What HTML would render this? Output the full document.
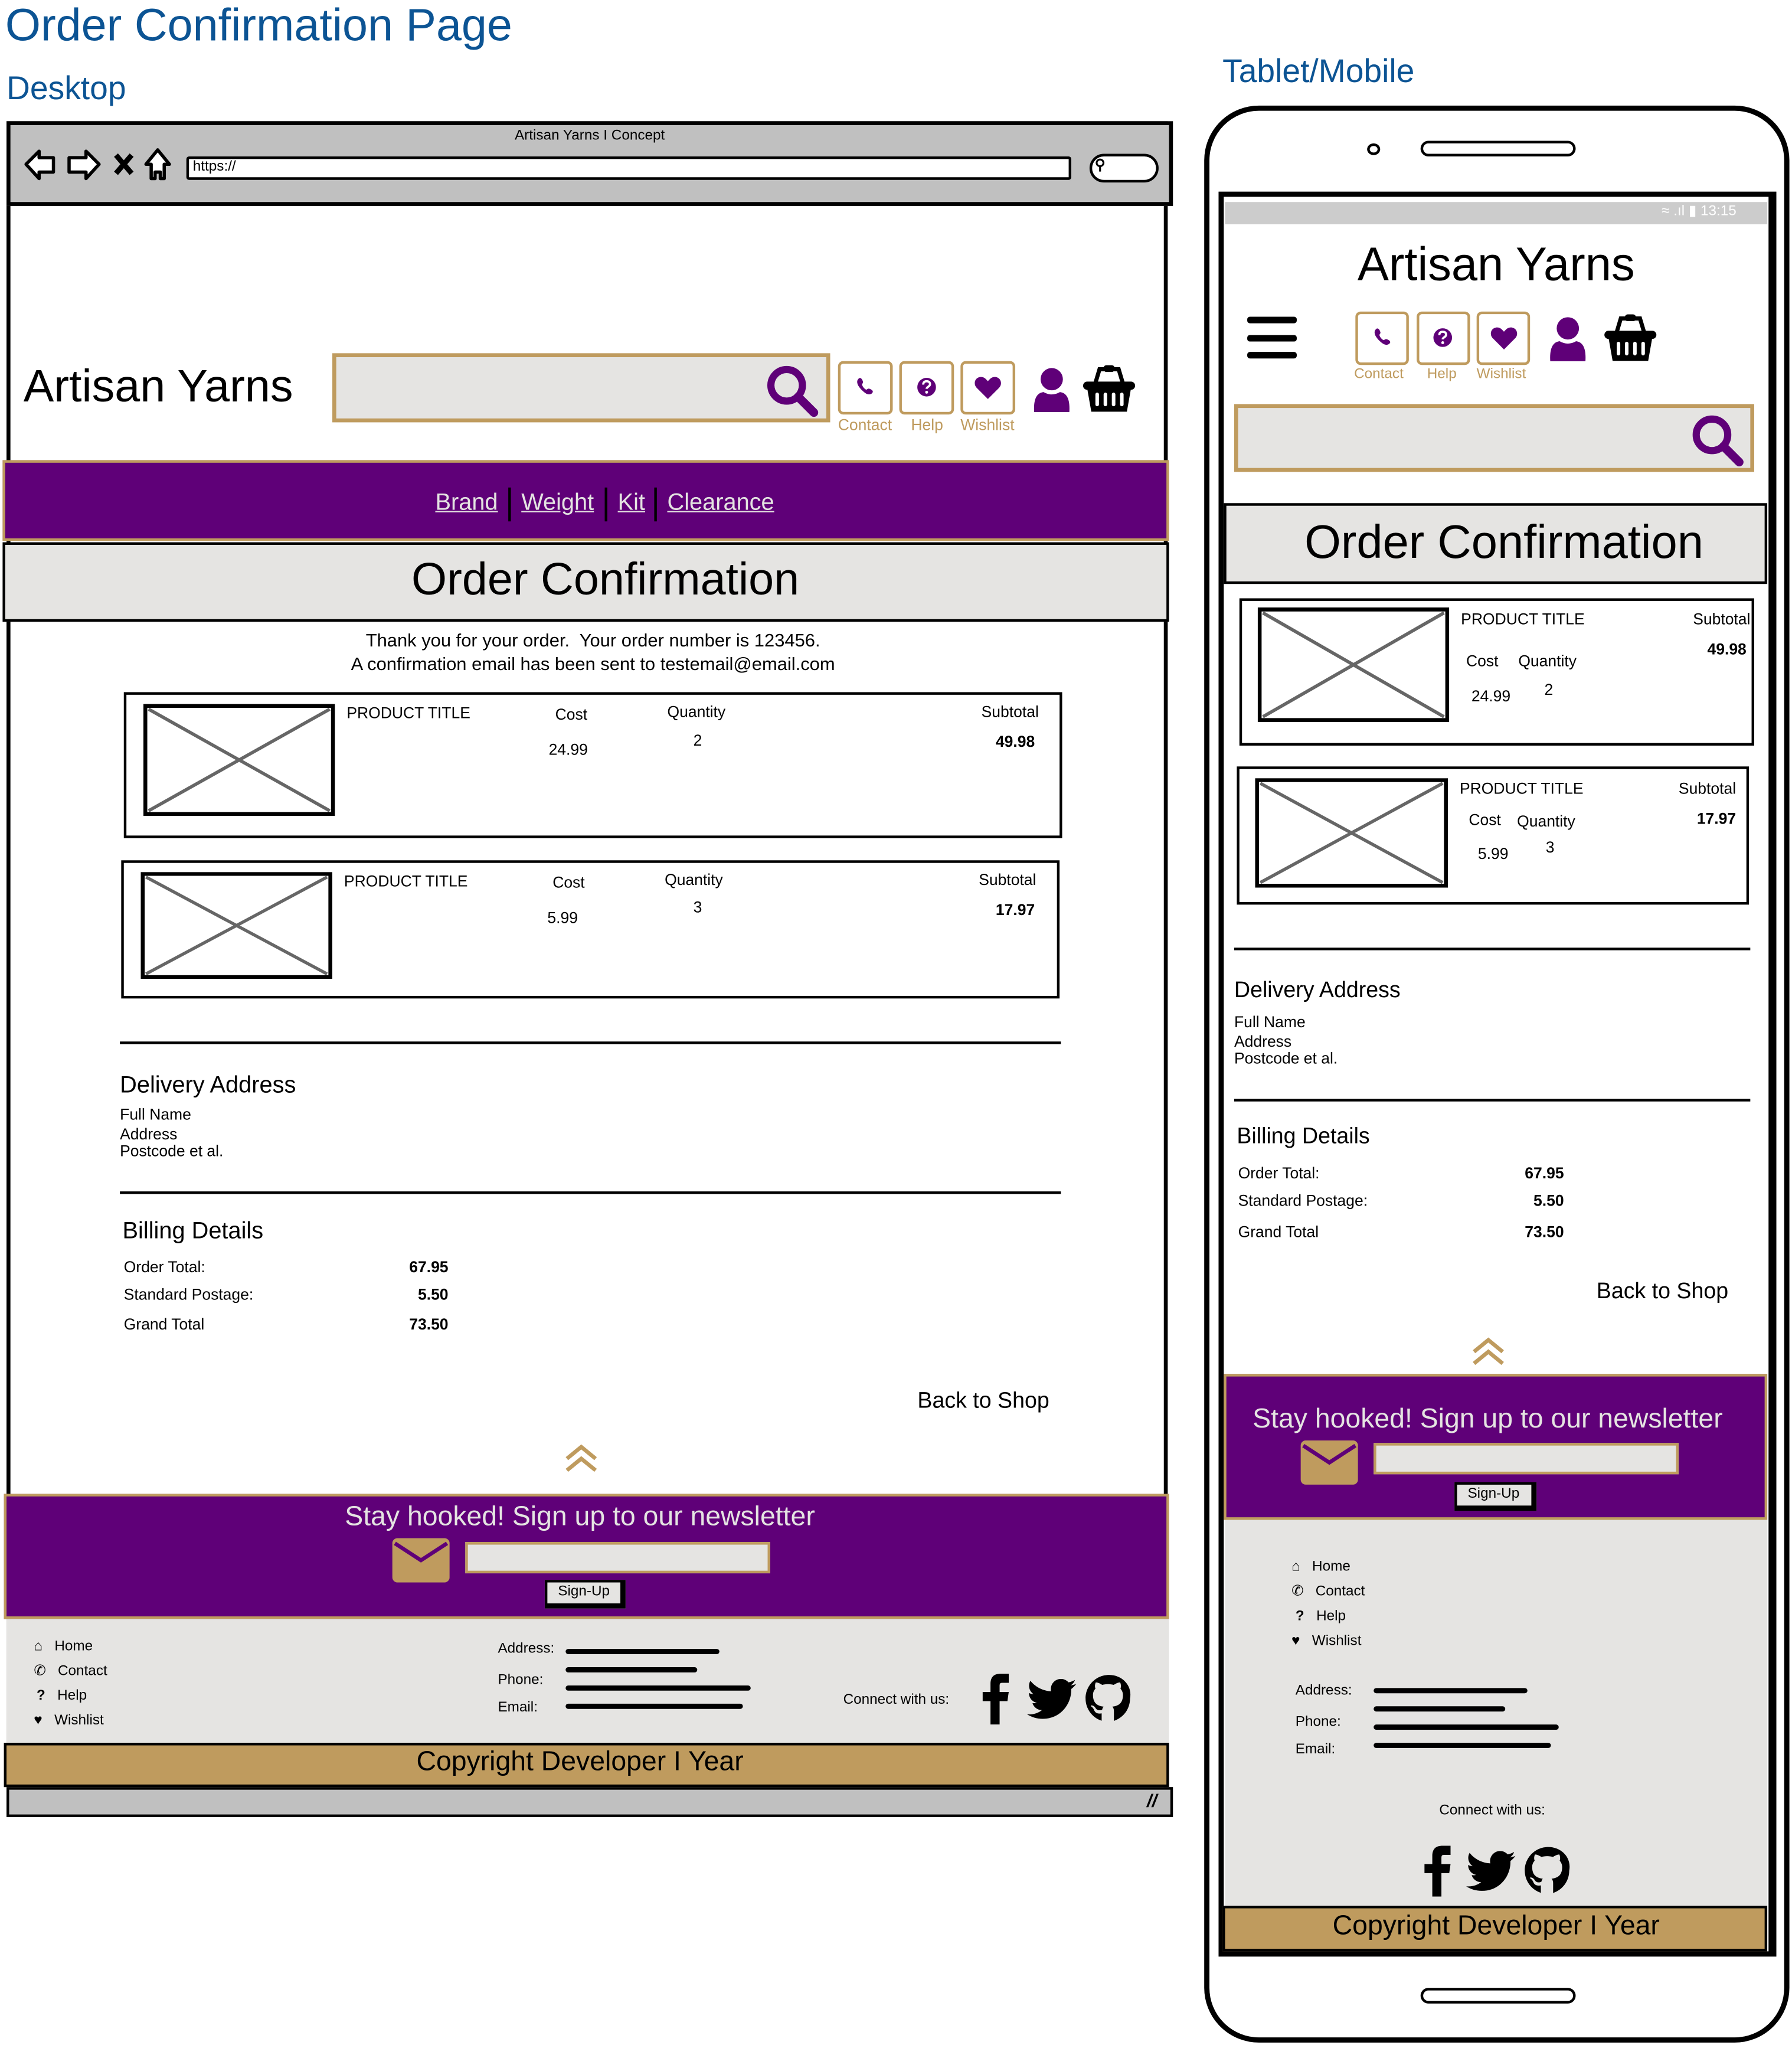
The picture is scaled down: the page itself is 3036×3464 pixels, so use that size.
<!DOCTYPE html>
<html><head><meta charset="utf-8">
<style>
html,body{margin:0;padding:0;background:#fff;}
body{width:3036px;height:3464px;overflow:hidden;position:relative;}
#s{position:absolute;left:0;top:0;width:1375px;height:1569px;transform:scale(2.208);transform-origin:0 0;font-family:"Liberation Sans",sans-serif;color:#000;}
#s div,#s span,#s svg{position:absolute;}
.t{white-space:nowrap;line-height:1;}
.blue{color:#0c5494;}
.gold{background:#bf9b5e;}
.pur{background:#5f0078;}
.lg{background:#e5e4e2;}
.scr{height:4px;background:#000;border-radius:3px;}
</style></head><body>
<svg width="0" height="0" style="position:absolute">
<defs>
<symbol id="mag" viewBox="0 0 40 40"><circle cx="16" cy="16" r="11" fill="none" stroke="#5f0078" stroke-width="5"/><line x1="24" y1="24" x2="35" y2="35" stroke="#5f0078" stroke-width="6" stroke-linecap="round"/></symbol>
<symbol id="phone" viewBox="0 0 40 40"><path d="M12 10c2-2 4 0 5 3c1 2-1 3-1 4c1 3 3 5 5 6c1 0 2-2 4-1c3 1 5 3 3 5c-2 2-5 2-8 0c-4-3-7-6-9-10c-1-3-1-5 1-7z" fill="#5f0078"/></symbol>
<symbol id="heart" viewBox="0 0 40 40"><path d="M20 34L7 21C2 16 5 8 12 8C16 8 18 11 20 13C22 11 24 8 28 8C35 8 38 16 33 21Z" fill="#5f0078"/></symbol>
<symbol id="help" viewBox="0 0 40 40"><circle cx="20" cy="20" r="11" fill="#5f0078"/><path d="M16 17c0-3 2-4 4-4s4 1 4 3.5c0 3-4 3-4 5.5" fill="none" stroke="#fff" stroke-width="2.6"/><circle cx="20" cy="26" r="1.7" fill="#fff"/></symbol>
<symbol id="person" viewBox="0 0 40 40"><circle cx="20" cy="11" r="9.5" fill="#5f0078"/><path d="M5 39Q4 23 13 22Q20 26 27 22Q36 23 35 39Z" fill="#5f0078"/></symbol>
<symbol id="basket" viewBox="0 0 40 40"><path d="M10 16L13 6H27L30 16" fill="none" stroke="#000" stroke-width="3"/><rect x="16" y="3" width="8" height="5" rx="2"/><rect x="1" y="15" width="38" height="6" rx="3"/><path d="M4 20H36L33 37H7Z"/><rect x="10" y="23" width="2.6" height="10" rx="1.3" fill="#fff"/><rect x="16" y="23" width="2.6" height="10" rx="1.3" fill="#fff"/><rect x="22" y="23" width="2.6" height="10" rx="1.3" fill="#fff"/><rect x="28" y="23" width="2.6" height="10" rx="1.3" fill="#fff"/></symbol>
<symbol id="env" viewBox="0 0 44 34"><rect x="0" y="0" width="44" height="34" rx="4" fill="#bf9b5e"/><path d="M2 4L22 17L42 4" fill="none" stroke="#5f0078" stroke-width="3"/></symbol>
<symbol id="chev" viewBox="0 0 26 23"><path d="M2 12L13 3L24 12M2 21L13 12L24 21" fill="none" stroke="#bf9b5e" stroke-width="3"/></symbol>
<symbol id="fb" viewBox="0 0 24 40"><path d="M8 40V22H2V15H8V9C8 3 11 1 16 1H22V8H17C15 8 15 9 15 11V15H22L21 22H15V40Z"/></symbol>
<symbol id="tw" viewBox="0 0 40 34"><path d="M40 4c-1.5.7-3 1-4.7 1.3 1.7-1 3-2.6 3.6-4.5-1.6 1-3.4 1.6-5.2 2C32 1 29.9 0 27.5 0c-4.5 0-8.2 3.7-8.2 8.2 0 .6 0 1.3.2 1.9C12.7 9.8 6.6 6.5 2.6 1.5c-.7 1.2-1.1 2.6-1.1 4.1 0 2.8 1.5 5.3 3.6 6.8-1.3 0-2.6-.4-3.7-1v.1c0 4 2.8 7.3 6.6 8-.7.2-1.4.3-2.2.3-.5 0-1 0-1.5-.1 1 3.3 4.1 5.7 7.7 5.7-2.8 2.2-6.3 3.5-10.2 3.5-.7 0-1.3 0-2-.1C3.6 31.2 7.9 32.5 12.6 32.5c15.1 0 23.3-12.5 23.3-23.3v-1c1.6-1.2 3-2.6 4.1-4.2z"/></symbol>
<symbol id="gh" viewBox="0 0 40 40"><path d="M20 1C9.5 1 1 9.5 1 20c0 8.4 5.4 15.5 13 18v-6c-5 1-6-2.5-6-2.5-.9-2.2-2.1-2.8-2.1-2.8-1.7-1.2.1-1.1.1-1.1 1.9.1 2.9 1.9 2.9 1.9 1.7 2.9 4.4 2 5.5 1.6.2-1.2.7-2 1.2-2.5-4.2-.5-8.6-2.1-8.6-9.4 0-2.1.7-3.8 2-5.1-.2-.5-.9-2.4.2-5 0 0 1.6-.5 5.2 1.9 1.5-.4 3.1-.6 4.7-.6s3.2.2 4.7.6c3.6-2.4 5.2-1.9 5.2-1.9 1 2.6.4 4.5.2 5 1.2 1.3 2 3 2 5.1 0 7.3-4.4 8.9-8.6 9.4.7.6 1.3 1.8 1.3 3.5v8c7.6-2.5 13-9.6 13-18C39 9.5 30.5 1 20 1z"/></symbol>
<symbol id="ximg" viewBox="0 0 146 85" preserveAspectRatio="none"><rect x="1.5" y="1.5" width="143" height="82" fill="#fff" stroke="#000" stroke-width="3"/><path d="M4 4L142 81M142 4L4 81" stroke="#666" stroke-width="2.5"/></symbol>
</defs></svg>

<div id="s">
<div class="t blue" style="left:4px;top:2px;font-size:35px;">Order Confirmation Page</div>
<div class="t blue" style="left:5px;top:56px;font-size:25px;">Desktop</div>
<div class="t blue" style="left:938px;top:43px;font-size:25px;">Tablet/Mobile</div>

<!-- DESKTOP -->
<div style="left:5px;top:93px;width:891px;height:1298px;border:3px solid #000;box-sizing:border-box;"></div>
<div style="left:5px;top:93px;width:895px;height:65px;background:#c0c0c0;border:3px solid #000;box-sizing:border-box;"></div>
<div class="t" style="left:0;width:905px;text-align:center;top:99px;font-size:11px;">Artisan Yarns I Concept</div>
<svg style="left:17px;top:113px" width="120" height="28" viewBox="0 0 120 28">
<path d="M3 13L13 3V8H24V19H13V24Z" fill="#fff" stroke="#000" stroke-width="2.5" stroke-linejoin="round"/>
<path d="M59 13L49 3V8H36V19H49V24Z" fill="#fff" stroke="#000" stroke-width="2.5" stroke-linejoin="round"/>
<path d="M72 6L84 20M84 6L72 20" stroke="#000" stroke-width="4"/>
<path d="M104 2L113 13H109V24H106V19H102V24H99V13H95Z" fill="#fff" stroke="#000" stroke-width="2.5" stroke-linejoin="round"/>
</svg>
<div style="left:143px;top:120px;width:679px;height:18px;background:#fff;border:2.5px solid #000;box-sizing:border-box;border-radius:2px;"></div>
<div class="t" style="left:148px;top:123px;font-size:11px;">https://</div>
<div style="left:836px;top:118px;width:53px;height:22px;background:#fff;border:2.5px solid #000;box-sizing:border-box;border-radius:11px;"></div>
<div class="t" style="left:840px;top:122px;font-size:11px;font-weight:bold;">&#9906;</div>

<div class="t" style="left:18px;top:279px;font-size:35px;">Artisan Yarns</div>
<div class="lg" style="left:255px;top:271px;width:382px;height:53px;border:3px solid #bf9b5e;box-sizing:border-box;"></div>
<svg style="left:586px;top:278px" width="44" height="44"><use href="#mag"/></svg>
<div style="left:643px;top:277px;width:42px;height:41px;border:2.5px solid #bf9b5e;border-radius:4px;box-sizing:border-box;"></div>
<div style="left:690px;top:277px;width:42px;height:41px;border:2.5px solid #bf9b5e;border-radius:4px;box-sizing:border-box;"></div>
<div style="left:737px;top:277px;width:42px;height:41px;border:2.5px solid #bf9b5e;border-radius:4px;box-sizing:border-box;"></div>
<svg style="left:651px;top:284px" width="26" height="26"><use href="#phone"/></svg>
<svg style="left:698px;top:284px" width="26" height="26"><use href="#help"/></svg>
<svg style="left:745px;top:284px" width="26" height="26"><use href="#heart"/></svg>
<div class="t" style="left:643px;top:320px;font-size:12px;color:#bf9b5e;">Contact</div>
<div class="t" style="left:699px;top:320px;font-size:12px;color:#bf9b5e;">Help</div>
<div class="t" style="left:737px;top:320px;font-size:12px;color:#bf9b5e;">Wishlist</div>
<svg style="left:789px;top:279px" width="36" height="40"><use href="#person"/></svg>
<svg style="left:829px;top:277px" width="44" height="42"><use href="#basket"/></svg>

<div class="pur" style="left:2px;top:353px;width:895px;height:62px;border:2.5px solid #bf9b5e;box-sizing:border-box;"></div>
<div class="t" style="left:334px;top:376px;font-size:18px;color:#e5e4e2;text-decoration:underline;">Brand</div>
<div style="left:390px;top:374px;width:2px;height:26px;background:#000;"></div>
<div class="t" style="left:400px;top:376px;font-size:18px;color:#e5e4e2;text-decoration:underline;">Weight</div>
<div style="left:464px;top:374px;width:2px;height:26px;background:#000;"></div>
<div class="t" style="left:474px;top:376px;font-size:18px;color:#e5e4e2;text-decoration:underline;">Kit</div>
<div style="left:502px;top:374px;width:2px;height:26px;background:#000;"></div>
<div class="t" style="left:512px;top:376px;font-size:18px;color:#e5e4e2;text-decoration:underline;">Clearance</div>

<div class="lg" style="left:2px;top:416px;width:895px;height:61px;border:2.5px solid #000;box-sizing:border-box;"></div>
<div class="t" style="left:2px;width:925px;text-align:center;top:427px;font-size:35px;">Order Confirmation</div>
<div class="t" style="left:0;width:910px;text-align:center;top:484px;font-size:14px;">Thank you for your order.&nbsp; Your order number is 123456.</div>
<div class="t" style="left:0;width:910px;text-align:center;top:502px;font-size:14px;">A confirmation email has been sent to testemail@email.com</div>

<div style="left:95px;top:531px;width:720px;height:112px;border:2.5px solid #000;box-sizing:border-box;"></div>
<svg style="left:110px;top:540px" width="147" height="86"><use href="#ximg"/></svg>
<div class="t" style="left:266px;top:541px;font-size:12px;">PRODUCT TITLE</div>
<div class="t" style="left:426px;top:542px;font-size:12px;">Cost</div>
<div class="t" style="left:512px;top:540px;font-size:12px;">Quantity</div>
<div class="t" style="left:753px;top:540px;font-size:12px;">Subtotal</div>
<div class="t" style="left:421px;top:569px;font-size:12px;">24.99</div>
<div class="t" style="left:532px;top:562px;font-size:12px;">2</div>
<div class="t" style="left:764px;top:563px;font-size:12px;font-weight:bold;">49.98</div>

<div style="left:93px;top:660px;width:720px;height:106px;border:2.5px solid #000;box-sizing:border-box;"></div>
<svg style="left:108px;top:669px" width="147" height="82"><use href="#ximg"/></svg>
<div class="t" style="left:264px;top:670px;font-size:12px;">PRODUCT TITLE</div>
<div class="t" style="left:424px;top:671px;font-size:12px;">Cost</div>
<div class="t" style="left:510px;top:669px;font-size:12px;">Quantity</div>
<div class="t" style="left:751px;top:669px;font-size:12px;">Subtotal</div>
<div class="t" style="left:420px;top:698px;font-size:12px;">5.99</div>
<div class="t" style="left:532px;top:690px;font-size:12px;">3</div>
<div class="t" style="left:764px;top:692px;font-size:12px;font-weight:bold;">17.97</div>

<div style="left:92px;top:799px;width:722px;height:2px;background:#000;"></div>
<div class="t" style="left:92px;top:823px;font-size:18px;">Delivery Address</div>
<div class="t" style="left:92px;top:849px;font-size:12px;">Full Name</div>
<div class="t" style="left:92px;top:864px;font-size:12px;">Address</div>
<div class="t" style="left:92px;top:877px;font-size:12px;">Postcode et al.</div>
<div style="left:92px;top:914px;width:722px;height:2px;background:#000;"></div>
<div class="t" style="left:94px;top:935px;font-size:18px;">Billing Details</div>
<div class="t" style="left:95px;top:966px;font-size:12px;">Order Total:</div>
<div class="t" style="left:95px;top:987px;font-size:12px;">Standard Postage:</div>
<div class="t" style="left:95px;top:1010px;font-size:12px;">Grand Total</div>
<div class="t" style="left:250px;width:94px;text-align:right;top:966px;font-size:12px;font-weight:bold;">67.95</div>
<div class="t" style="left:250px;width:94px;text-align:right;top:987px;font-size:12px;font-weight:bold;">5.50</div>
<div class="t" style="left:250px;width:94px;text-align:right;top:1010px;font-size:12px;font-weight:bold;">73.50</div>
<div class="t" style="left:704px;top:1066px;font-size:17px;">Back to Shop</div>
<svg style="left:433px;top:1107px" width="26" height="23"><use href="#chev"/></svg>

<div class="pur" style="left:3px;top:1146px;width:894px;height:96px;border:2.5px solid #bf9b5e;box-sizing:border-box;"></div>
<div class="t" style="left:0;width:890px;text-align:center;top:1153px;font-size:21px;color:#e5e4e2;">Stay hooked! Sign up to our newsletter</div>
<svg style="left:301px;top:1180px" width="44" height="34"><use href="#env"/></svg>
<div class="lg" style="left:357px;top:1183px;width:234px;height:24px;border:2.5px solid #bf9b5e;box-sizing:border-box;"></div>
<div class="lg" style="left:418px;top:1212px;width:62px;height:22px;border:2px solid #000;border-right-width:4px;border-bottom-width:4px;box-sizing:border-box;"></div>
<div class="t" style="left:418px;width:60px;text-align:center;top:1216px;font-size:11px;">Sign-Up</div>

<div class="lg" style="left:5px;top:1242px;width:892px;height:96px;"></div>
<div class="t" style="left:26px;top:1258px;font-size:11px;">&#8962;&nbsp;&nbsp; Home</div>
<div class="t" style="left:26px;top:1277px;font-size:11px;">&#9990;&nbsp;&nbsp; Contact</div>
<div class="t" style="left:28px;top:1296px;font-size:11px;font-weight:bold;">?</div><div class="t" style="left:44px;top:1296px;font-size:11px;">Help</div>
<div class="t" style="left:26px;top:1315px;font-size:11px;">&#9829;&nbsp;&nbsp; Wishlist</div>
<div class="t" style="left:382px;top:1260px;font-size:11px;">Address:</div>
<div class="t" style="left:382px;top:1284px;font-size:11px;">Phone:</div>
<div class="t" style="left:382px;top:1305px;font-size:11px;">Email:</div>
<div class="scr" style="left:434px;top:1265px;width:118px;"></div>
<div class="scr" style="left:434px;top:1279px;width:101px;"></div>
<div class="scr" style="left:434px;top:1293px;width:142px;"></div>
<div class="scr" style="left:434px;top:1307px;width:136px;"></div>
<div class="t" style="left:647px;top:1299px;font-size:11px;">Connect with us:</div>
<svg style="left:752px;top:1283px" width="24" height="40"><use href="#fb"/></svg>
<svg style="left:788px;top:1288px" width="38" height="32"><use href="#tw"/></svg>
<svg style="left:832px;top:1284px" width="38" height="38"><use href="#gh"/></svg>

<div class="gold" style="left:3px;top:1337px;width:894px;height:34px;border:2.5px solid #000;box-sizing:border-box;"></div>
<div class="t" style="left:0;width:890px;text-align:center;top:1341px;font-size:21px;">Copyright Developer I Year</div>
<div style="left:5px;top:1371px;width:895px;height:23px;background:#c0c0c0;border:2.5px solid #000;box-sizing:border-box;"></div>
<div class="t" style="left:880px;top:1374px;font-size:14px;font-weight:bold;font-style:italic;">//</div>

<!-- MOBILE -->
<div style="left:924px;top:81px;width:449px;height:1486px;border:4px solid #000;border-radius:42px;box-sizing:border-box;background:#fff;"></div>
<div style="left:1049px;top:110px;width:10px;height:9px;border:2.5px solid #000;border-radius:50%;box-sizing:border-box;"></div>
<div style="left:1090px;top:108px;width:119px;height:12px;border:2.5px solid #000;border-radius:6px;box-sizing:border-box;"></div>
<div style="left:1090px;top:1525px;width:119px;height:12px;border:2.5px solid #000;border-radius:6px;box-sizing:border-box;"></div>
<div style="left:935px;top:147px;width:428px;height:1354px;border:4px solid #000;border-right-width:6px;box-sizing:border-box;background:#fff;"></div>
<div style="left:940px;top:155px;width:416px;height:17px;background:#cccccc;"></div>
<div class="t" style="left:1275px;top:157px;font-size:11px;color:#fff;">&#8776; .ıl &#9646; 13:15</div>
<div class="t" style="left:938px;width:420px;text-align:center;top:185px;font-size:36px;">Artisan Yarns</div>
<div style="left:957px;top:243px;width:38px;height:5px;background:#000;border-radius:2px;"></div>
<div style="left:957px;top:257px;width:38px;height:5px;background:#000;border-radius:2px;"></div>
<div style="left:957px;top:270px;width:38px;height:5px;background:#000;border-radius:2px;"></div>
<div style="left:1040px;top:239px;width:41px;height:41px;border:2.5px solid #bf9b5e;border-radius:4px;box-sizing:border-box;"></div>
<div style="left:1087px;top:239px;width:41px;height:41px;border:2.5px solid #bf9b5e;border-radius:4px;box-sizing:border-box;"></div>
<div style="left:1133px;top:239px;width:41px;height:41px;border:2.5px solid #bf9b5e;border-radius:4px;box-sizing:border-box;"></div>
<svg style="left:1048px;top:246px" width="26" height="26"><use href="#phone"/></svg>
<svg style="left:1094px;top:246px" width="26" height="26"><use href="#help"/></svg>
<svg style="left:1141px;top:246px" width="26" height="26"><use href="#heart"/></svg>
<div class="t" style="left:1039px;top:282px;font-size:11px;color:#bf9b5e;">Contact</div>
<div class="t" style="left:1095px;top:282px;font-size:11px;color:#bf9b5e;">Help</div>
<div class="t" style="left:1133px;top:282px;font-size:11px;color:#bf9b5e;">Wishlist</div>
<svg style="left:1185px;top:240px" width="36" height="40"><use href="#person"/></svg>
<svg style="left:1229px;top:238px" width="44" height="42"><use href="#basket"/></svg>
<div class="lg" style="left:947px;top:310px;width:399px;height:52px;border:3px solid #bf9b5e;box-sizing:border-box;"></div>
<svg style="left:1296px;top:316px" width="44" height="44"><use href="#mag"/></svg>
<div class="lg" style="left:939px;top:386px;width:417px;height:62px;border:2.5px solid #000;box-sizing:border-box;"></div>
<div class="t" style="left:939px;width:430px;text-align:center;top:398px;font-size:36px;">Order Confirmation</div>

<div style="left:951px;top:459px;width:395px;height:113px;border:2.5px solid #000;box-sizing:border-box;"></div>
<svg style="left:965px;top:466px" width="147" height="88"><use href="#ximg"/></svg>
<div class="t" style="left:1121px;top:469px;font-size:12px;">PRODUCT TITLE</div>
<div class="t" style="left:1299px;top:469px;font-size:12px;">Subtotal</div>
<div class="t" style="left:1310px;top:492px;font-size:12px;font-weight:bold;">49.98</div>
<div class="t" style="left:1125px;top:501px;font-size:12px;">Cost</div>
<div class="t" style="left:1165px;top:501px;font-size:12px;">Quantity</div>
<div class="t" style="left:1129px;top:528px;font-size:12px;">24.99</div>
<div class="t" style="left:1185px;top:523px;font-size:12px;">2</div>

<div style="left:949px;top:588px;width:393px;height:106px;border:2.5px solid #000;box-sizing:border-box;"></div>
<svg style="left:963px;top:597px" width="148" height="84"><use href="#ximg"/></svg>
<div class="t" style="left:1120px;top:599px;font-size:12px;">PRODUCT TITLE</div>
<div class="t" style="left:1288px;top:599px;font-size:12px;">Subtotal</div>
<div class="t" style="left:1302px;top:622px;font-size:12px;font-weight:bold;">17.97</div>
<div class="t" style="left:1127px;top:623px;font-size:12px;">Cost</div>
<div class="t" style="left:1164px;top:624px;font-size:12px;">Quantity</div>
<div class="t" style="left:1134px;top:649px;font-size:12px;">5.99</div>
<div class="t" style="left:1186px;top:644px;font-size:12px;">3</div>

<div style="left:947px;top:727px;width:396px;height:2px;background:#000;"></div>
<div class="t" style="left:947px;top:751px;font-size:17px;">Delivery Address</div>
<div class="t" style="left:947px;top:778px;font-size:12px;">Full Name</div>
<div class="t" style="left:947px;top:793px;font-size:12px;">Address</div>
<div class="t" style="left:947px;top:806px;font-size:12px;">Postcode et al.</div>
<div style="left:947px;top:843px;width:396px;height:2px;background:#000;"></div>
<div class="t" style="left:949px;top:863px;font-size:17px;">Billing Details</div>
<div class="t" style="left:950px;top:894px;font-size:12px;">Order Total:</div>
<div class="t" style="left:950px;top:915px;font-size:12px;">Standard Postage:</div>
<div class="t" style="left:950px;top:939px;font-size:12px;">Grand Total</div>
<div class="t" style="left:1100px;width:100px;text-align:right;top:894px;font-size:12px;font-weight:bold;">67.95</div>
<div class="t" style="left:1100px;width:100px;text-align:right;top:915px;font-size:12px;font-weight:bold;">5.50</div>
<div class="t" style="left:1100px;width:100px;text-align:right;top:939px;font-size:12px;font-weight:bold;">73.50</div>
<div class="t" style="left:1225px;top:982px;font-size:17px;">Back to Shop</div>
<svg style="left:1129px;top:1025px" width="26" height="23"><use href="#chev"/></svg>

<div class="pur" style="left:939px;top:1054px;width:417px;height:112px;border:2.5px solid #bf9b5e;box-sizing:border-box;"></div>
<div class="t" style="left:939px;width:405px;text-align:center;top:1078px;font-size:21px;color:#e5e4e2;">Stay hooked! Sign up to our newsletter</div>
<svg style="left:998px;top:1105px" width="44" height="34"><use href="#env"/></svg>
<div class="lg" style="left:1054px;top:1107px;width:234px;height:24px;border:2.5px solid #bf9b5e;box-sizing:border-box;"></div>
<div class="lg" style="left:1116px;top:1137px;width:63px;height:22px;border:2px solid #000;border-right-width:4px;border-bottom-width:4px;box-sizing:border-box;"></div>
<div class="t" style="left:1116px;width:60px;text-align:center;top:1141px;font-size:11px;">Sign-Up</div>

<div class="lg" style="left:940px;top:1166px;width:416px;height:297px;"></div>
<div class="t" style="left:991px;top:1197px;font-size:11px;">&#8962;&nbsp;&nbsp; Home</div>
<div class="t" style="left:991px;top:1216px;font-size:11px;">&#9990;&nbsp;&nbsp; Contact</div>
<div class="t" style="left:994px;top:1235px;font-size:11px;font-weight:bold;">?</div><div class="t" style="left:1010px;top:1235px;font-size:11px;">Help</div>
<div class="t" style="left:991px;top:1254px;font-size:11px;">&#9829;&nbsp;&nbsp; Wishlist</div>
<div class="t" style="left:994px;top:1292px;font-size:11px;">Address:</div>
<div class="t" style="left:994px;top:1316px;font-size:11px;">Phone:</div>
<div class="t" style="left:994px;top:1337px;font-size:11px;">Email:</div>
<div class="scr" style="left:1054px;top:1295px;width:118px;"></div>
<div class="scr" style="left:1054px;top:1309px;width:101px;"></div>
<div class="scr" style="left:1054px;top:1323px;width:142px;"></div>
<div class="scr" style="left:1054px;top:1337px;width:136px;"></div>
<div class="t" style="left:940px;width:410px;text-align:center;top:1384px;font-size:11px;">Connect with us:</div>
<svg style="left:1091px;top:1415px" width="24" height="40"><use href="#fb"/></svg>
<svg style="left:1125px;top:1420px" width="38" height="32"><use href="#tw"/></svg>
<svg style="left:1169px;top:1416px" width="38" height="38"><use href="#gh"/></svg>
<div class="gold" style="left:938px;top:1462px;width:418px;height:35px;border:2.5px solid #000;box-sizing:border-box;"></div>
<div class="t" style="left:938px;width:420px;text-align:center;top:1467px;font-size:21px;">Copyright Developer I Year</div>
</div>
</body></html>
